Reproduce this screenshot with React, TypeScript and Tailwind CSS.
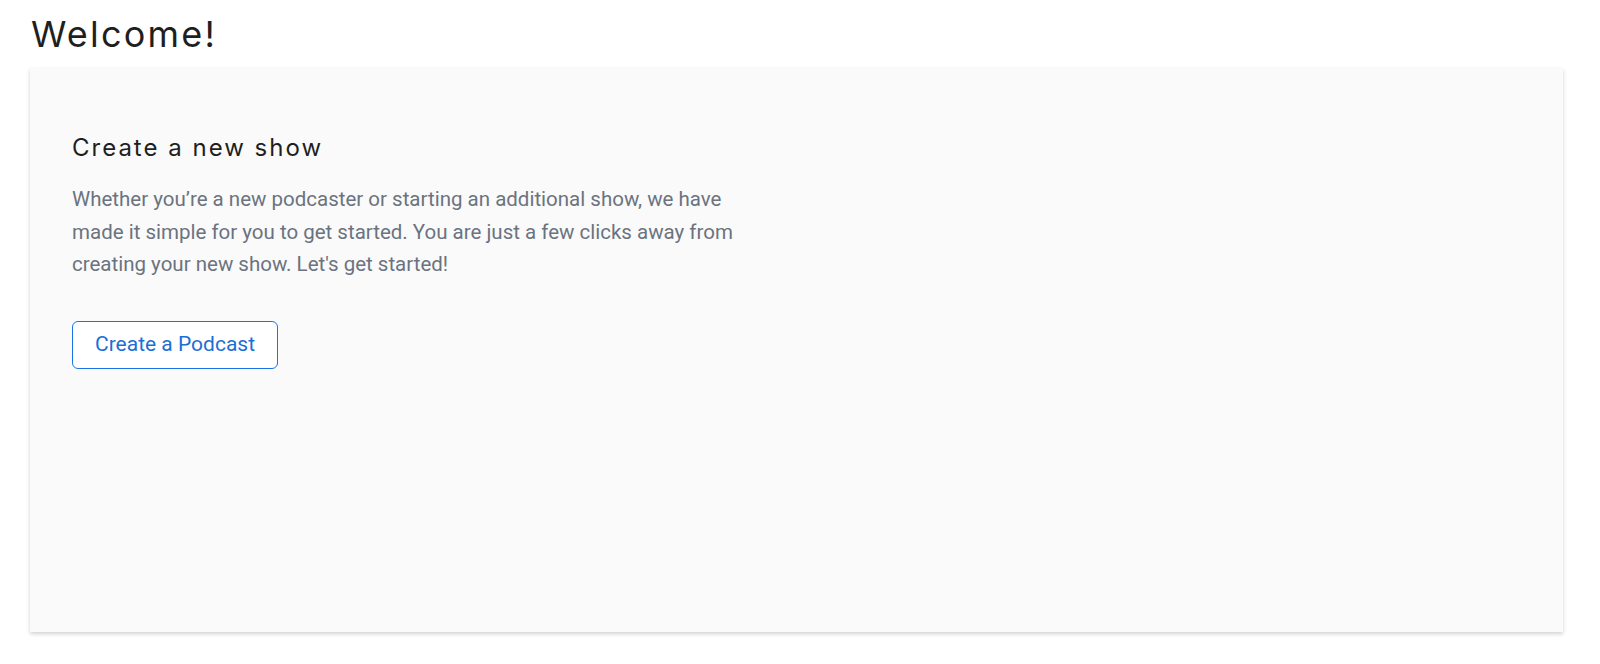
export default function App() {
  return (
    <div className="min-h-screen bg-white px-[30px] pt-[10px]">
      <h1 className="font-['Inter',sans-serif] text-[36px] font-normal leading-[48px] tracking-[2.2px] text-[#1f1f1f] pl-[1px]">
        Welcome!
      </h1>
      <section className="mt-[10px] h-[564px] w-[1533px] bg-[#fafafa] px-[42px] pt-[64px] shadow-[0_2px_4px_rgba(0,0,0,0.18)]">
        <h2 className="font-['Inter',sans-serif] text-[24px] font-normal leading-[32px] tracking-[2px] text-[#1f1f1f]">
          Create a new show
        </h2>
        <p className="mt-[19px] max-w-[685px] font-['Roboto',sans-serif] text-[20.5px] leading-[32.7px] text-[#6b7380]">
          Whether you’re a new podcaster or starting an additional show, we have made it simple for you to get started. You are just a few clicks away from creating your new show. Let's get started!
        </p>
        <button className="mt-[40px] inline-flex h-[48px] items-center rounded-[6px] border border-[#1a73e8] bg-white px-[22px] font-['Roboto',sans-serif] text-[21px] text-[#1a6fd6]">
          Create a Podcast
        </button>
      </section>
    </div>
  )
}
